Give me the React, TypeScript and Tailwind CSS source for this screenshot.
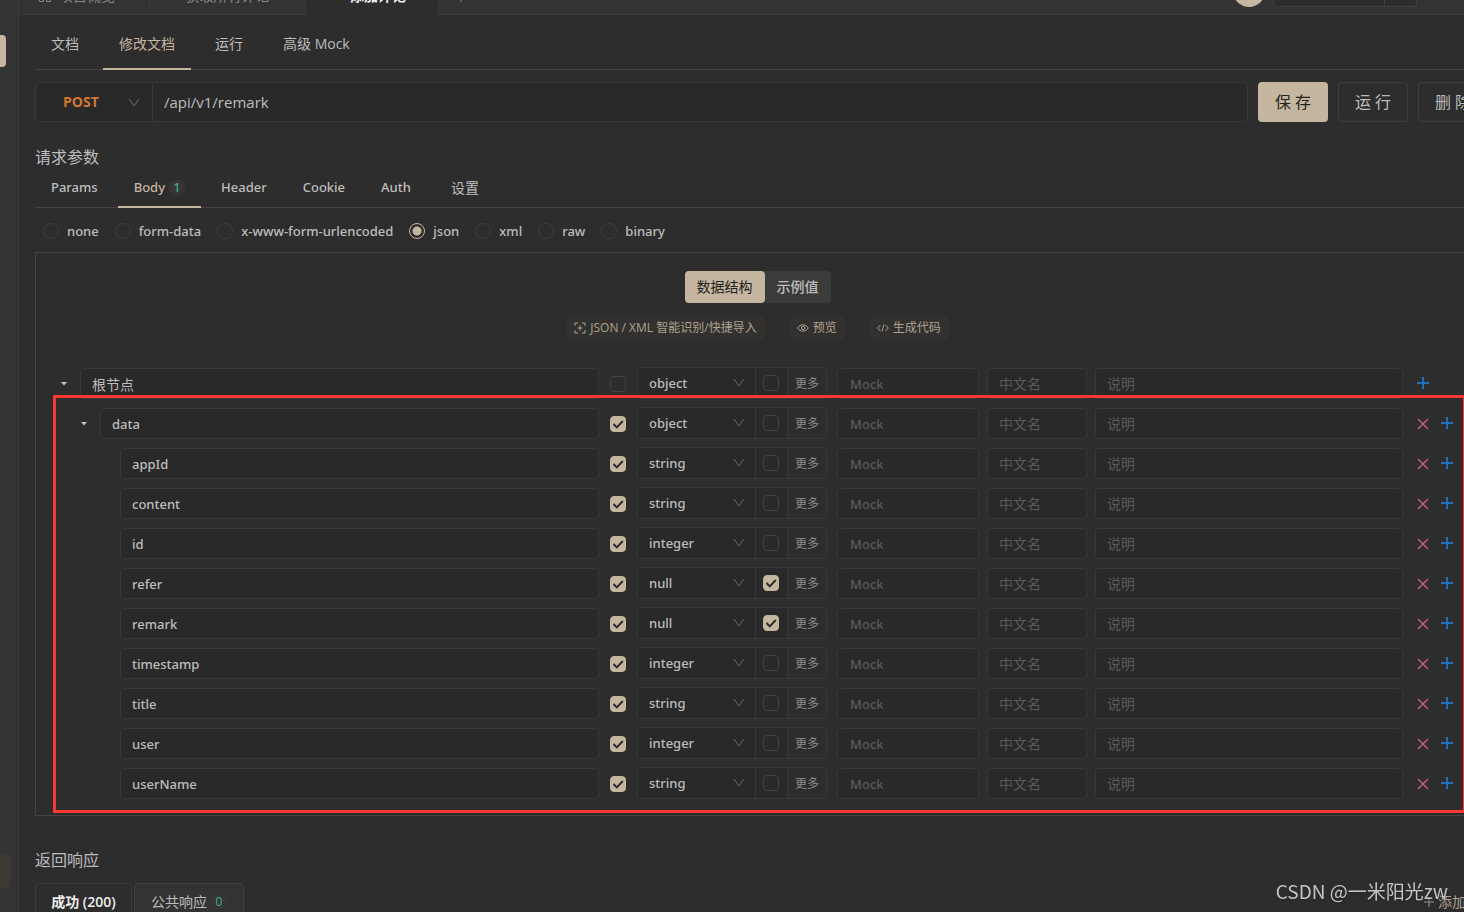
import clsx from "clsx";
import { ReactNode } from "react";

interface IField {
  name: string;
  type: string;
  level: number;
  required: boolean;
  nullable?: boolean;
}

const ROOT: IField = { name: "根节点", type: "object", level: 0, required: false };

const FIELDS: IField[] = [
  { name: "data", type: "object", level: 1, required: true },
  { name: "appId", type: "string", level: 2, required: true },
  { name: "content", type: "string", level: 2, required: true },
  { name: "id", type: "integer", level: 2, required: true },
  { name: "refer", type: "null", level: 2, required: true, nullable: true },
  { name: "remark", type: "null", level: 2, required: true, nullable: true },
  { name: "timestamp", type: "integer", level: 2, required: true },
  { name: "title", type: "string", level: 2, required: true },
  { name: "user", type: "integer", level: 2, required: true },
  { name: "userName", type: "string", level: 2, required: true },
];

const TYPES = ["string", "integer", "boolean", "array", "object", "number", "null"];
const DOC_TABS = ["文档", "修改文档", "运行", "高级 Mock"];
const PARAM_TABS = ["Params", "Body", "Header", "Cookie", "Auth", "设置"];
const BODY_TYPES = ["none", "form-data", "x-www-form-urlencoded", "json", "xml", "raw", "binary"];
const INDENT = ["pl-0", "pl-5", "pl-10"];

const latinClass = "font-['Noto_Sans','Noto_Sans_CJK_SC',sans-serif] text-[13px] font-medium";

const inputClass =
  "h-[31px] w-full min-w-0 rounded border border-[#393939] bg-[#292929] px-[11px] text-[#bdbdbd] outline-none placeholder:text-[#5a5a5a]";

const Chevron = ({ className }: { className: string }) => (
  <svg
    viewBox="0 0 12 12"
    className={clsx("pointer-events-none absolute h-3 w-3", className)}
    fill="none"
    stroke="#6b6b6b"
  >
    <path d="M1 2l5 7 5-7" />
  </svg>
);

const PlusIcon = () => (
  <svg viewBox="0 0 12 12" className="h-3 w-3" fill="none" stroke="#1f6fb8" strokeWidth="2">
    <path d="M6 0v12M0 6h12" />
  </svg>
);

const CloseIcon = () => (
  <svg viewBox="0 0 12 12" className="mt-px h-3 w-3" fill="none" stroke="#cf5f7c" strokeWidth="1.4">
    <path d="M1 1l10 10M11 1L1 11" />
  </svg>
);

const Check = ({ label, checked }: { label: string; checked?: boolean }) => (
  <span className="relative flex h-4 w-4">
    <input
      type="checkbox"
      aria-label={label}
      defaultChecked={checked}
      className="peer h-4 w-4 appearance-none rounded border border-[#444444] checked:border-[#c5b6a0] checked:bg-[#c5b6a0]"
    />
    <svg
      viewBox="0 0 16 16"
      className="pointer-events-none absolute inset-0 hidden h-4 w-4 peer-checked:block"
      fill="none"
      stroke="#2b2b2b"
      strokeWidth="2"
    >
      <path d="M3.5 8l3.3 3.4 6-6.4" />
    </svg>
  </span>
);

const Badge = ({ children }: { children: ReactNode }) => (
  <span className="flex h-4 w-4 items-center justify-center rounded-full bg-[#363636] text-xs font-medium text-[#43b08d]">
    {children}
  </span>
);

const FieldRow = ({ field }: { field: IField }) => {
  const { name, type, level, required, nullable } = field;

  return (
    <div className="grid h-8 grid-cols-[minmax(0,545fr)_38px_190px_152px_108px_minmax(0,316fr)_56px] items-end">
      <div className={clsx("flex items-center", INDENT[level])}>
        <div className="mr-1.5 flex w-5 shrink-0 justify-center">
          {level < 2 && (
            <button aria-label={`收起 ${name}`} className="flex h-5 w-5 items-center justify-center">
              <svg viewBox="0 0 8 4" className="h-1 w-2" fill="#c4c4c4">
                <path d="M1 0h6L4 3.5z" />
              </svg>
            </button>
          )}
        </div>
        <input
          aria-label="字段名"
          defaultValue={name}
          className={clsx(inputClass, level === 0 ? "text-sm" : latinClass)}
        />
      </div>

      <div className="flex h-[31px] items-center justify-center">
        <Check label={`${name} 必需`} checked={required} />
      </div>

      <div className="flex h-8 rounded border border-[#393939] bg-[#292929]">
        <div className="relative flex-1">
          <select
            aria-label={`${name} 类型`}
            defaultValue={type}
            className={clsx(
              "h-full w-full appearance-none bg-transparent px-[11px] text-[#bdbdbd] outline-none",
              latinClass
            )}
          >
            {TYPES.map((item) => (
              <option key={item}>{item}</option>
            ))}
          </select>
          <Chevron className="top-[9px] right-2.5" />
        </div>
        <div className="flex w-8 items-center justify-center border-l border-[#393939] pr-px">
          <Check label={`${name} 允许为空`} checked={nullable} />
        </div>
        <button className="w-[39px] rounded-r border-l border-[#393939] bg-[#2d2d2d] pt-0.5 text-xs text-[#8c8c8c]">
          更多
        </button>
      </div>

      <div className="pl-2.5">
        <input
          aria-label="Mock"
          placeholder="Mock"
          className={clsx(inputClass, "pl-3", latinClass)}
        />
      </div>
      <div className="pl-2">
        <input aria-label="中文名" placeholder="中文名" className={clsx(inputClass, "text-sm")} />
      </div>
      <div className="pl-2">
        <input aria-label="说明" placeholder="说明" className={clsx(inputClass, "text-sm")} />
      </div>

      <div className="flex h-8 items-center pl-2">
        {level > 0 && (
          <button aria-label={`删除 ${name}`} className="flex w-6 justify-center">
            <CloseIcon />
          </button>
        )}
        <button aria-label={`添加到 ${name}`} className="flex w-6 justify-center">
          <PlusIcon />
        </button>
      </div>
    </div>
  );
};

const TopBar = () => (
  <header className="flex h-[15px] shrink-0 items-end overflow-hidden bg-[#333333] text-sm text-[#8a8a8a]">
    <button className="flex h-[38px] w-[131px] items-center border-r border-b border-[#3b3b3b] pl-5">
      <svg viewBox="0 0 12 12" className="mr-2 h-3 w-3" fill="none" stroke="#8a8a8a">
        <path d="M.5.5h4v4h-4zM7.5.5h4v4h-4zM.5 7.5h4v4h-4zM7.5 7.5h4v4h-4z" />
      </svg>
      项目概览
    </button>
    <button className="h-[38px] w-[156px] border-r border-b border-[#3b3b3b]">获取所有评论</button>
    <button className="h-[38px] w-[132px] bg-[#2d2d2d] pl-3 font-bold text-[#f0f0f0]">添加评论</button>
    <div className="flex h-[38px] flex-1 items-center border-b border-l border-[#3b3b3b] pl-4">
      <button aria-label="新标签">
        <svg viewBox="0 0 12 12" className="h-3 w-3" stroke="#8a8a8a">
          <path d="M6 0v12M0 6h12" />
        </svg>
      </button>
    </div>
    <div className="flex h-[38px] items-center border-b border-[#3b3b3b] pr-[47px] pb-2.5">
      <span className="mr-2 h-8 w-8 rounded-full bg-[#c5b6a0]" />
      <button
        aria-label="环境"
        className="h-8 w-28 rounded-l border border-[#404040] bg-[#2d2d2d]"
      />
      <button
        aria-label="菜单"
        className="h-8 w-8 rounded-r border border-l-0 border-[#404040] bg-[#2d2d2d]"
      />
    </div>
  </header>
);

const toolClass = "flex h-6 items-center gap-1 rounded bg-[#33312f] px-2 text-xs text-[#aea28f]";

const Tools = () => (
  <div className="mt-[13px] flex justify-center gap-6 pl-0.5">
    <button className={toolClass}>
      <svg viewBox="0 0 12 12" className="h-3 w-3" fill="none" stroke="currentColor">
        <path d="M1 4V1h3M8 1h3v3M11 8v3H8M4 11H1V8M6 3.5v5M3.5 6h5" />
      </svg>
      JSON / XML 智能识别/快捷导入
    </button>
    <button className={toolClass}>
      <svg viewBox="0 0 12 12" className="h-3 w-3" fill="none" stroke="currentColor">
        <path d="M.7 6C3.2 1.8 8.8 1.8 11.3 6 8.8 10.2 3.2 10.2.7 6z" />
        <circle cx="6" cy="6" r="1.7" />
      </svg>
      预览
    </button>
    <button className={toolClass}>
      <svg viewBox="0 0 12 12" className="h-3 w-3" fill="none" stroke="currentColor">
        <path d="M3.5 3L.7 6l2.8 3M8.5 3l2.8 3-2.8 3M7 2.5l-2 7" />
      </svg>
      生成代码
    </button>
  </div>
);

export default function App() {
  return (
    <div className="flex h-screen overflow-hidden bg-[#2d2d2d] font-['Open_Sans','Noto_Sans_CJK_SC',sans-serif] text-sm text-[#bdbdbd]">
      <aside className="flex w-[19px] shrink-0 flex-col items-start justify-between border-r border-[#3b3b3b] bg-[#333333] pt-[35px] pb-6">
        <span className="h-8 w-1.5 rounded-r bg-[#c5b6a0]" />
        <span className="h-[34px] w-2.5 rounded-r bg-[#3d3a36]" />
      </aside>

      <div className="flex min-w-0 flex-1 flex-col">
        <TopBar />

        <main className="-mr-4 ml-4">
          <nav className="mt-1 flex h-[51px] gap-2 border-b border-[#444444]">
            {DOC_TABS.map((tab, index) => (
              <button
                key={tab}
                className={clsx(
                  "-mb-px border-b-2 px-4",
                  index === 1 ? "border-[#c5b6a0] text-[#c5b6a0]" : "border-transparent"
                )}
              >
                {tab}
              </button>
            ))}
          </nav>

          <div className="mt-3 -mr-2 flex h-10 gap-2.5 text-base">
            <div className="flex min-w-0 flex-1 rounded border border-[#393939] bg-[#292929]">
              <div className="relative w-[117px] border-r border-[#393939]">
                <select
                  aria-label="请求方法"
                  defaultValue="POST"
                  className="h-full w-full appearance-none bg-transparent pl-[27px] text-sm font-bold text-[#d3782f] outline-none"
                >
                  <option>GET</option>
                  <option>POST</option>
                  <option>PUT</option>
                  <option>DELETE</option>
                </select>
                <Chevron className="top-3.5 right-3" />
              </div>
              <input
                aria-label="接口路径"
                defaultValue="/api/v1/remark"
                className="min-w-0 flex-1 bg-transparent px-[11px] text-[15px] outline-none"
              />
            </div>
            <button className="w-[70px] rounded bg-[#c5b6a0] text-[#222222]">保 存</button>
            <button className="w-[70px] rounded border border-[#404040]">运 行</button>
            <button className="w-[70px] rounded border border-[#404040]">删 除</button>
          </div>

          <h2 className="mt-[23px] text-base leading-6">请求参数</h2>
          <nav className="flex h-[39px] gap-1 border-b border-[#444444]">
            {PARAM_TABS.map((tab) => (
              <button
                key={tab}
                className={clsx(
                  "-mb-px flex items-center gap-1 border-b-2 px-4",
                  tab === "设置" ? "ml-1" : latinClass,
                  tab === "Body" ? "border-[#c5b6a0] text-[#c5b6a0]" : "border-transparent"
                )}
              >
                {tab}
                {tab === "Body" && <Badge>1</Badge>}
              </button>
            ))}
          </nav>

          <div className={clsx("flex h-11 items-center gap-4 pt-0.5 pl-2", latinClass)}>
            {BODY_TYPES.map((item) => (
              <label key={item} className="flex items-center gap-2">
                <input
                  type="radio"
                  name="body"
                  defaultChecked={item === "json"}
                  className="h-4 w-4 appearance-none rounded-full border border-[#404040] checked:border-[#c5b6a0] checked:bg-[radial-gradient(circle,#c5b6a0_4px,transparent_5px)]"
                />
                {item}
              </label>
            ))}
          </div>

          <section className="border border-[#444444] pt-[18px] pr-5 pb-4 pl-[18px]">
            <div className="flex h-8 justify-center pl-0.5">
              <button className="w-20 rounded bg-[#c5b6a0] text-[#222222]">数据结构</button>
              <button className="w-[66px] rounded-r bg-[#3b3b3b] font-medium">示例值</button>
            </div>
            <Tools />

            <div className="mt-[27px]">
              <FieldRow field={ROOT} />
              <div className="relative mt-2 flex flex-col gap-2">
                {FIELDS.map((field) => (
                  <FieldRow key={field.name} field={field} />
                ))}
                <div className="pointer-events-none absolute -top-3 -right-[7px] -bottom-3.5 -left-px border-3 border-[#fa3833]" />
              </div>
            </div>
          </section>

          <h2 className="mt-8 text-base leading-6">返回响应</h2>
          <div className="mt-[11px] flex h-[38px] items-start gap-0.5">
            <button className="h-[38px] w-[97px] rounded-t border border-[#3b3b3b] font-semibold text-[#eeeeee]">
              成功 (200)
            </button>
            <button className="flex h-[38px] w-[110px] items-center justify-center gap-1 rounded-t border border-[#404040] bg-[#333333]">
              公共响应
              <Badge>0</Badge>
            </button>
            <button className="ml-auto flex h-[38px] w-14 shrink-0 items-center gap-1 whitespace-nowrap text-[#aea28f]">
              <svg viewBox="0 0 10 10" className="h-2.5 w-2.5 shrink-0" stroke="#7d7468" strokeWidth="1.5">
                <path d="M5 0v10M0 5h10" />
              </svg>
              添加
            </button>
          </div>
        </main>
      </div>

      <div className="pointer-events-none fixed right-4 bottom-2 font-['Noto_Sans_CJK_SC',sans-serif] text-[19px] text-[#c4c4c4] text-shadow-sm">
        CSDN @一米阳光zw
      </div>
    </div>
  );
}
